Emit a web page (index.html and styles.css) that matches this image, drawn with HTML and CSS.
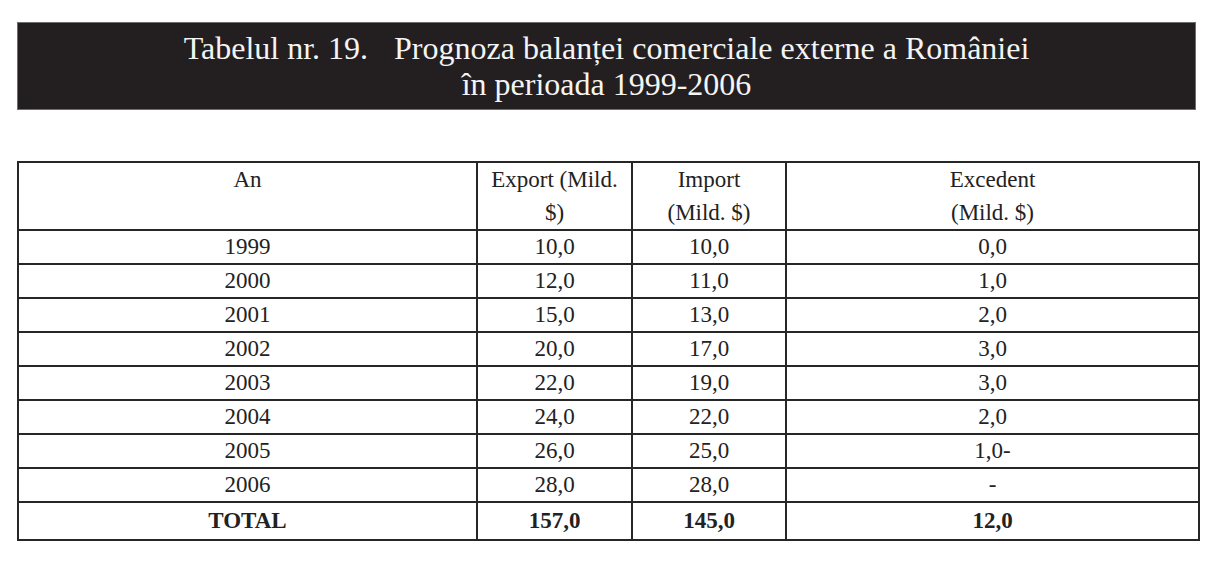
FILE: index.html
```html
<!DOCTYPE html>
<html lang="ro">
<head>
<meta charset="utf-8">
<title>Tabelul nr. 19</title>
<link rel="stylesheet" href="styles.css">
</head>
<body>
<div class="page">
  <div class="title-bar">
    <div class="title-line">Tabelul nr. 19.<span class="gap"></span>Prognoza balanței comerciale externe a României</div>
    <div class="title-line">în perioada 1999-2006</div>
  </div>
  <table class="data">
    <colgroup>
      <col class="c-an">
      <col class="c-exp">
      <col class="c-imp">
      <col class="c-exc">
    </colgroup>
    <thead>
      <tr class="head">
        <th>An</th>
        <th>Export (Mild.<br>$)</th>
        <th>Import<br>(Mild. $)</th>
        <th>Excedent<br>(Mild. $)</th>
      </tr>
    </thead>
    <tbody>
      <tr><td>1999</td><td>10,0</td><td>10,0</td><td>0,0</td></tr>
      <tr><td>2000</td><td>12,0</td><td>11,0</td><td>1,0</td></tr>
      <tr><td>2001</td><td>15,0</td><td>13,0</td><td>2,0</td></tr>
      <tr><td>2002</td><td>20,0</td><td>17,0</td><td>3,0</td></tr>
      <tr><td>2003</td><td>22,0</td><td>19,0</td><td>3,0</td></tr>
      <tr><td>2004</td><td>24,0</td><td>22,0</td><td>2,0</td></tr>
      <tr><td>2005</td><td>26,0</td><td>25,0</td><td>1,0-</td></tr>
      <tr><td>2006</td><td>28,0</td><td>28,0</td><td>-</td></tr>
      <tr class="total"><td>TOTAL</td><td>157,0</td><td>145,0</td><td>12,0</td></tr>
    </tbody>
  </table>
</div>
</body>
</html>
```

FILE: styles.css
```css
html, body {
  margin: 0;
  padding: 0;
  background: #ffffff;
}

.page {
  padding: 22px 26px 0 17px;
  font-family: "Liberation Serif", "Times New Roman", serif;
  color: #222222;
}

.title-bar {
  width: 1179px;
  box-sizing: border-box;
  background: #231f20;
  border: 1px solid #6d6d6d;
  padding: 7px 0 7px;
  color: #f4f4f4;
  text-align: center;
  font-size: 32px;
  line-height: 36px;
}

.gap {
  display: inline-block;
  width: 26px;
}

.data {
  margin-top: 51px;
  width: 1181px;
  border-collapse: collapse;
  table-layout: fixed;
  font-size: 23px;
  line-height: 32px;
}

.c-an { width: 459px; }
.c-exp { width: 155px; }
.c-imp { width: 154px; }
.c-exc { width: 413px; }

.data th,
.data td {
  border: 2px solid #262626;
  padding: 0 2px;
  text-align: center;
  font-weight: normal;
  white-space: nowrap;
}

.head th {
  vertical-align: top;
  line-height: 33px;
}

.total td {
  font-weight: bold;
  padding-top: 2px;
  padding-bottom: 2px;
}
```
